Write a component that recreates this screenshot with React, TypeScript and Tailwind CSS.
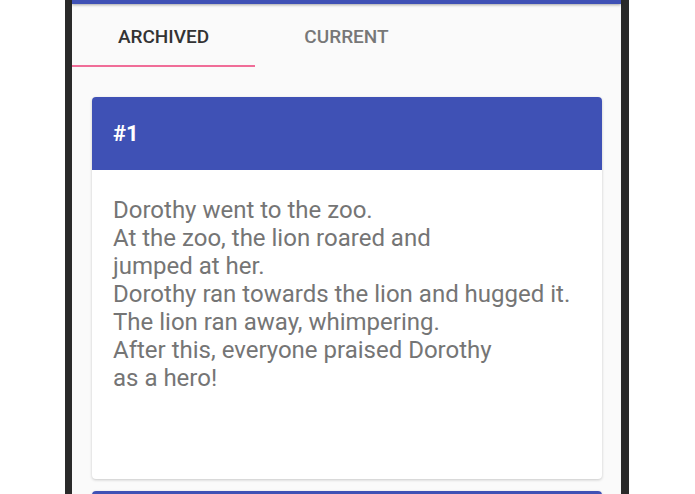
export default function App() {
  const story = [
    "Dorothy went to the zoo.",
    "At the zoo, the lion roared and",
    "jumped at her.",
    "Dorothy ran towards the lion and hugged it.",
    "The lion ran away, whimpering.",
    "After this, everyone praised Dorothy",
    "as a hero!",
  ];

  return (
    <div
      className="w-[695px] h-[494px] bg-white flex overflow-hidden"
      style={{ fontFamily: "Roboto, 'Liberation Sans', sans-serif" }}
    >
      <div className="w-[65px] shrink-0" />
      {/* phone frame */}
      <div className="w-[564px] shrink-0 flex border-l-[7px] border-r-[8px] border-[#2a2a2a]">
        <div className="flex-1 flex flex-col bg-[#fafafa]">
          {/* app bar edge */}
          <div className="h-[4px] shrink-0 bg-[#3f51b5] shadow-[0_1px_3px_rgba(0,0,0,0.35)] relative z-10" />

          {/* tabs */}
          <div className="flex shrink-0">
            <div className="w-[183px] flex flex-col">
              <div className="h-[61px] pt-[5px] flex items-center justify-center text-[19px] font-medium text-[#333333]">
                ARCHIVED
              </div>
              <div className="h-[2px] bg-[#f06d98]" />
            </div>
            <div className="w-[183px] flex flex-col">
              <div className="h-[61px] pt-[5px] flex items-center justify-center text-[19px] font-medium text-[#777777]">
                CURRENT
              </div>
            </div>
          </div>

          {/* cards */}
          <div className="flex flex-col shrink-0 gap-[12px] pt-[30px] pl-[20px] pr-[19px]">
            <div className="rounded-[4px] overflow-hidden bg-white shadow-[0_1px_3px_rgba(0,0,0,0.2)]">
              <div className="h-[73px] bg-[#3f51b5] flex items-center px-[21px] text-white text-[22px] font-bold">
                #1
              </div>
              <div className="h-[309px] pt-[26px] px-[21px] text-[24px] leading-[28px] text-[#757575]">
                {story.map((line) => (
                  <div key={line}>{line}</div>
                ))}
              </div>
            </div>
            <div className="rounded-[4px] overflow-hidden bg-white shadow-[0_1px_3px_rgba(0,0,0,0.2)]">
              <div className="h-[73px] bg-[#3f51b5]" />
            </div>
          </div>
        </div>
      </div>
    </div>
  );
}
